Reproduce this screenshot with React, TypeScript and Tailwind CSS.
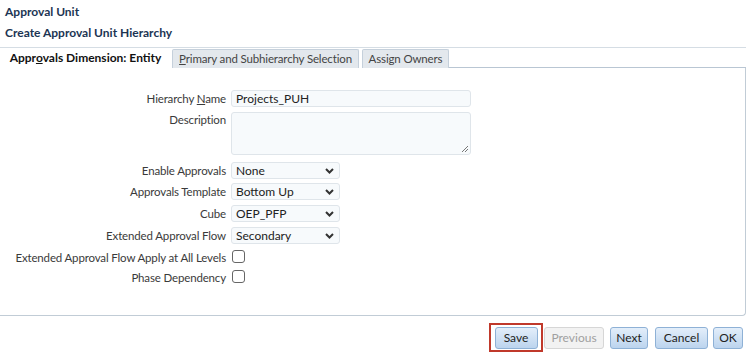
import React from "react";

const font = { fontFamily: 'Lato, "Noto Sans", sans-serif' };

function Select({ value }: { value: string }) {
  return (
    <div className="flex h-[17px] w-[109px] items-center justify-between rounded-[3px] border border-[#dfe5ea] bg-[#f7fafc] pl-[4px] pr-[5px] text-[12px] leading-none text-[#222]">
      <span>{value}</span>
      <svg width="9" height="6" viewBox="0 0 9 6">
        <path d="M1 1 L4.5 4.5 L8 1" fill="none" stroke="#333" strokeWidth="2" />
      </svg>
    </div>
  );
}

function Label({ children, className = "" }: { children: React.ReactNode; className?: string }) {
  return (
    <div className={"whitespace-nowrap text-right text-[11.5px] leading-[12px] tracking-[-0.15px] text-[#3a3a3a] " + className}>
      {children}
    </div>
  );
}

function Btn({ children, disabled, className = "" }: { children: React.ReactNode; disabled?: boolean; className?: string }) {
  return (
    <div
      className={
        "flex h-[22px] items-center justify-center rounded-[3px] border text-[12px] leading-none " +
        (disabled
          ? "border-[#d6d6d6] bg-[#f2f2f2] text-[#a0a0a0] "
          : "border-[#8eb1d6] bg-gradient-to-b from-[#e3eefa] to-[#bcd4ee] text-[#222] ") +
        className
      }
    >
      {children}
    </div>
  );
}

export default function App() {
  return (
    <div className="h-[356px] w-[746px] overflow-hidden bg-white" style={font}>
      <div className="pl-[5px] pt-[6px] text-[12px] font-bold leading-none text-[#1c3553]">Approval Unit</div>
      <div className="mt-[9px] pl-[5px] text-[12px] font-bold leading-none text-[#1c3553]">Create Approval Unit Hierarchy</div>
      {/* tabs */}
      <div className="mt-[8px] flex h-[21px] items-end border-t border-[#d5dde4]">
        <div className="flex h-[20px] w-[171px] items-center justify-center whitespace-nowrap text-[12px] font-bold leading-none text-[#111]">
          <span>
            Appr<span className="underline">o</span>vals Dimension: Entity
          </span>
        </div>
        <div className="ml-[1px] flex h-[19px] w-[187px] items-center justify-center whitespace-nowrap rounded-t-[2px] border border-b-0 border-[#c5d0db] bg-[#e3e8ed] text-[11.5px] leading-none tracking-[-0.15px] text-[#444]">
          <span>
            <span className="underline">P</span>rimary and Subhierarchy Selection
          </span>
        </div>
        <div className="ml-[3px] flex h-[19px] w-[87px] items-center justify-center whitespace-nowrap rounded-t-[2px] border border-b-0 border-[#c5d0db] bg-[#e3e8ed] text-[11.5px] leading-none tracking-[-0.15px] text-[#444]">
          Assign Owners
        </div>
        <div className="h-full flex-1 border-b border-[#b9c6d3]"></div>
      </div>
      {/* panel */}
      <div className="h-[248px] rounded-br-[4px] border-b border-r border-[#c1ccd6] pt-[22px]">
        <div className="grid grid-cols-[226px_1fr] gap-x-[5px]">
          <Label className="pt-[3px]">
            Hierarchy <span className="underline">N</span>ame
          </Label>
          <div className="flex h-[17px] w-[240px] items-center rounded-[3px] border border-[#dfe5ea] bg-[#f7fafc] pl-[4px] text-[12px] leading-none text-[#222]">
            Projects_PUH
          </div>

          <Label className="mt-[5px] pt-[2px]">Description</Label>
          <div className="relative mt-[5px] h-[43px] w-[240px] rounded-[3px] border border-[#dfe5ea] bg-[#f7fafc]">
            <svg className="absolute bottom-[1px] right-[1px]" width="8" height="8" viewBox="0 0 8 8">
              <path d="M7 1 L1 7 M7 4 L4 7" stroke="#777" strokeWidth="1" />
            </svg>
          </div>

          <Label className="mt-[7px] pt-[3px]">Enable Approvals</Label>
          <div className="mt-[7px]"><Select value="None" /></div>

          <Label className="mt-[4px] pt-[3px]">Approvals Template</Label>
          <div className="mt-[4px]"><Select value="Bottom Up" /></div>

          <Label className="mt-[5px] pt-[3px]">Cube</Label>
          <div className="mt-[5px]"><Select value="OEP_PFP" /></div>

          <Label className="mt-[5px] pt-[3px]">Extended Approval Flow</Label>
          <div className="mt-[5px]"><Select value="Secondary" /></div>

          <Label className="mt-[6px] pt-[2px]">Extended Approval Flow Apply at All Levels</Label>
          <div className="mt-[6px] pl-[1px]">
            <div className="h-[13px] w-[13px] rounded-[3px] border border-[#666] bg-white"></div>
          </div>

          <Label className="mt-[6px] pt-[2px]">Phase Dependency</Label>
          <div className="mt-[6px] pl-[1px]">
            <div className="h-[13px] w-[13px] rounded-[3px] border border-[#666] bg-white"></div>
          </div>
        </div>
      </div>
      {/* buttons */}
      <div className="mt-[7px] flex items-center justify-end pr-[3px]">
        <div className="flex h-[29px] w-[54px] items-center justify-center border-2 border-[#c0392b]">
          <Btn className="w-[43px]">Save</Btn>
        </div>
        <Btn disabled className="ml-[1px] w-[60px]">Previous</Btn>
        <Btn className="ml-[6px] w-[38px]">Next</Btn>
        <Btn className="ml-[7px] w-[53px]">Cancel</Btn>
        <Btn className="ml-[5px] w-[30px]">OK</Btn>
      </div>
    </div>
  );
}
